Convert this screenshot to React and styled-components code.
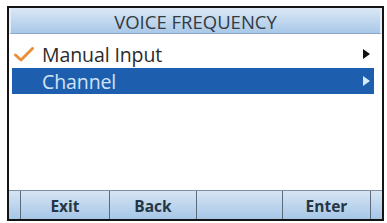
import React from "react";
import styled, { createGlobalStyle } from "styled-components";

const Global = createGlobalStyle`
  html, body { margin: 0; padding: 0; background: #ffffff; }
  body { width: 387px; height: 223px; overflow: hidden; font-family: "Open Sans", "Noto Sans", sans-serif; }
`;

const Frame = styled.div`
  box-sizing: border-box;
  margin: 6px 0 0 7px;
  width: 377px;
  height: 215px;
  border: 2px solid #141414;
  display: flex;
  flex-direction: column;
  background: #fff;
`;

const Header = styled.div`
  box-sizing: border-box;
  height: 26px;
  background: linear-gradient(#dbe8f5, #a9c8e8);
  border-left: 2px solid #e4eef8;
  border-right: 2px solid #e4eef8;
  border-bottom: 1px solid #8fa9c4;
  display: flex;
  align-items: center;
  justify-content: center;
  font-size: 18.5px;
  color: #343a40;
  letter-spacing: 0;
  padding-top: 1px;
`;

const List = styled.div`
  flex: 1;
  display: flex;
  flex-direction: column;
  padding: 8px 8px 0 3px;
`;

const Row = styled.div`
  box-sizing: border-box;
  height: 26px;
  display: flex;
  align-items: center;
  background: ${(p) => (p.$selected ? "#1d5fae" : "transparent")};
  color: ${(p) => (p.$selected ? "#d2e3f6" : "#2b2b2b")};
  font-size: 19.5px;
  padding-bottom: ${(p) => (p.$selected ? "0" : "2px")};
`;

const CheckSlot = styled.div`
  width: 30px;
  display: flex;
  justify-content: flex-start;
  padding-left: 2px;
  box-sizing: border-box;
  align-items: center;
`;

const Label = styled.span`
  flex: 1;
  letter-spacing: -0.1px;
`;

const Arrow = styled.div`
  width: 0;
  height: 0;
  border-top: 5px solid transparent;
  border-bottom: 5px solid transparent;
  border-left: 7px solid ${(p) => (p.$light ? "#d8e8fa" : "#111")};
  margin-right: 4px;
`;

const Toolbar = styled.div`
  box-sizing: border-box;
  height: 29px;
  display: flex;
  border-top: 1px solid #7d8e9f;
  background: linear-gradient(#d6e5f4, #a6c6e7);
`;

const Key = styled.div`
  box-sizing: border-box;
  width: ${(p) => p.$w}px;
  display: flex;
  align-items: center;
  justify-content: center;
  border-right: ${(p) => (p.$last ? "none" : "1px solid #5c6b7a")};
  font-weight: 700;
  font-size: 15.5px;
  color: #263645;
  padding-top: 2px;
`;

function Check() {
  return (
    <svg width="20" height="15" viewBox="0 0 20 15">
      <path d="M1.5 8 L7 13 L18.5 1.5" fill="none" stroke="#e8913a" strokeWidth="3" strokeLinecap="round" strokeLinejoin="round" />
    </svg>
  );
}

export default function App() {
  return (
    <>
      <Global />
      <Frame>
        <Header>VOICE FREQUENCY</Header>
        <List>
          <Row>
            <CheckSlot><Check /></CheckSlot>
            <Label>Manual Input</Label>
            <Arrow />
          </Row>
          <Row $selected>
            <CheckSlot />
            <Label>Channel</Label>
            <Arrow $light />
          </Row>
        </List>
        <Toolbar>
          <Key $w={12} />
          <Key $w={89}>Exit</Key>
          <Key $w={87}>Back</Key>
          <Key $w={86} />
          <Key $w={88}>Enter</Key>
          <Key $w={11} $last />
        </Toolbar>
      </Frame>
    </>
  );
}
